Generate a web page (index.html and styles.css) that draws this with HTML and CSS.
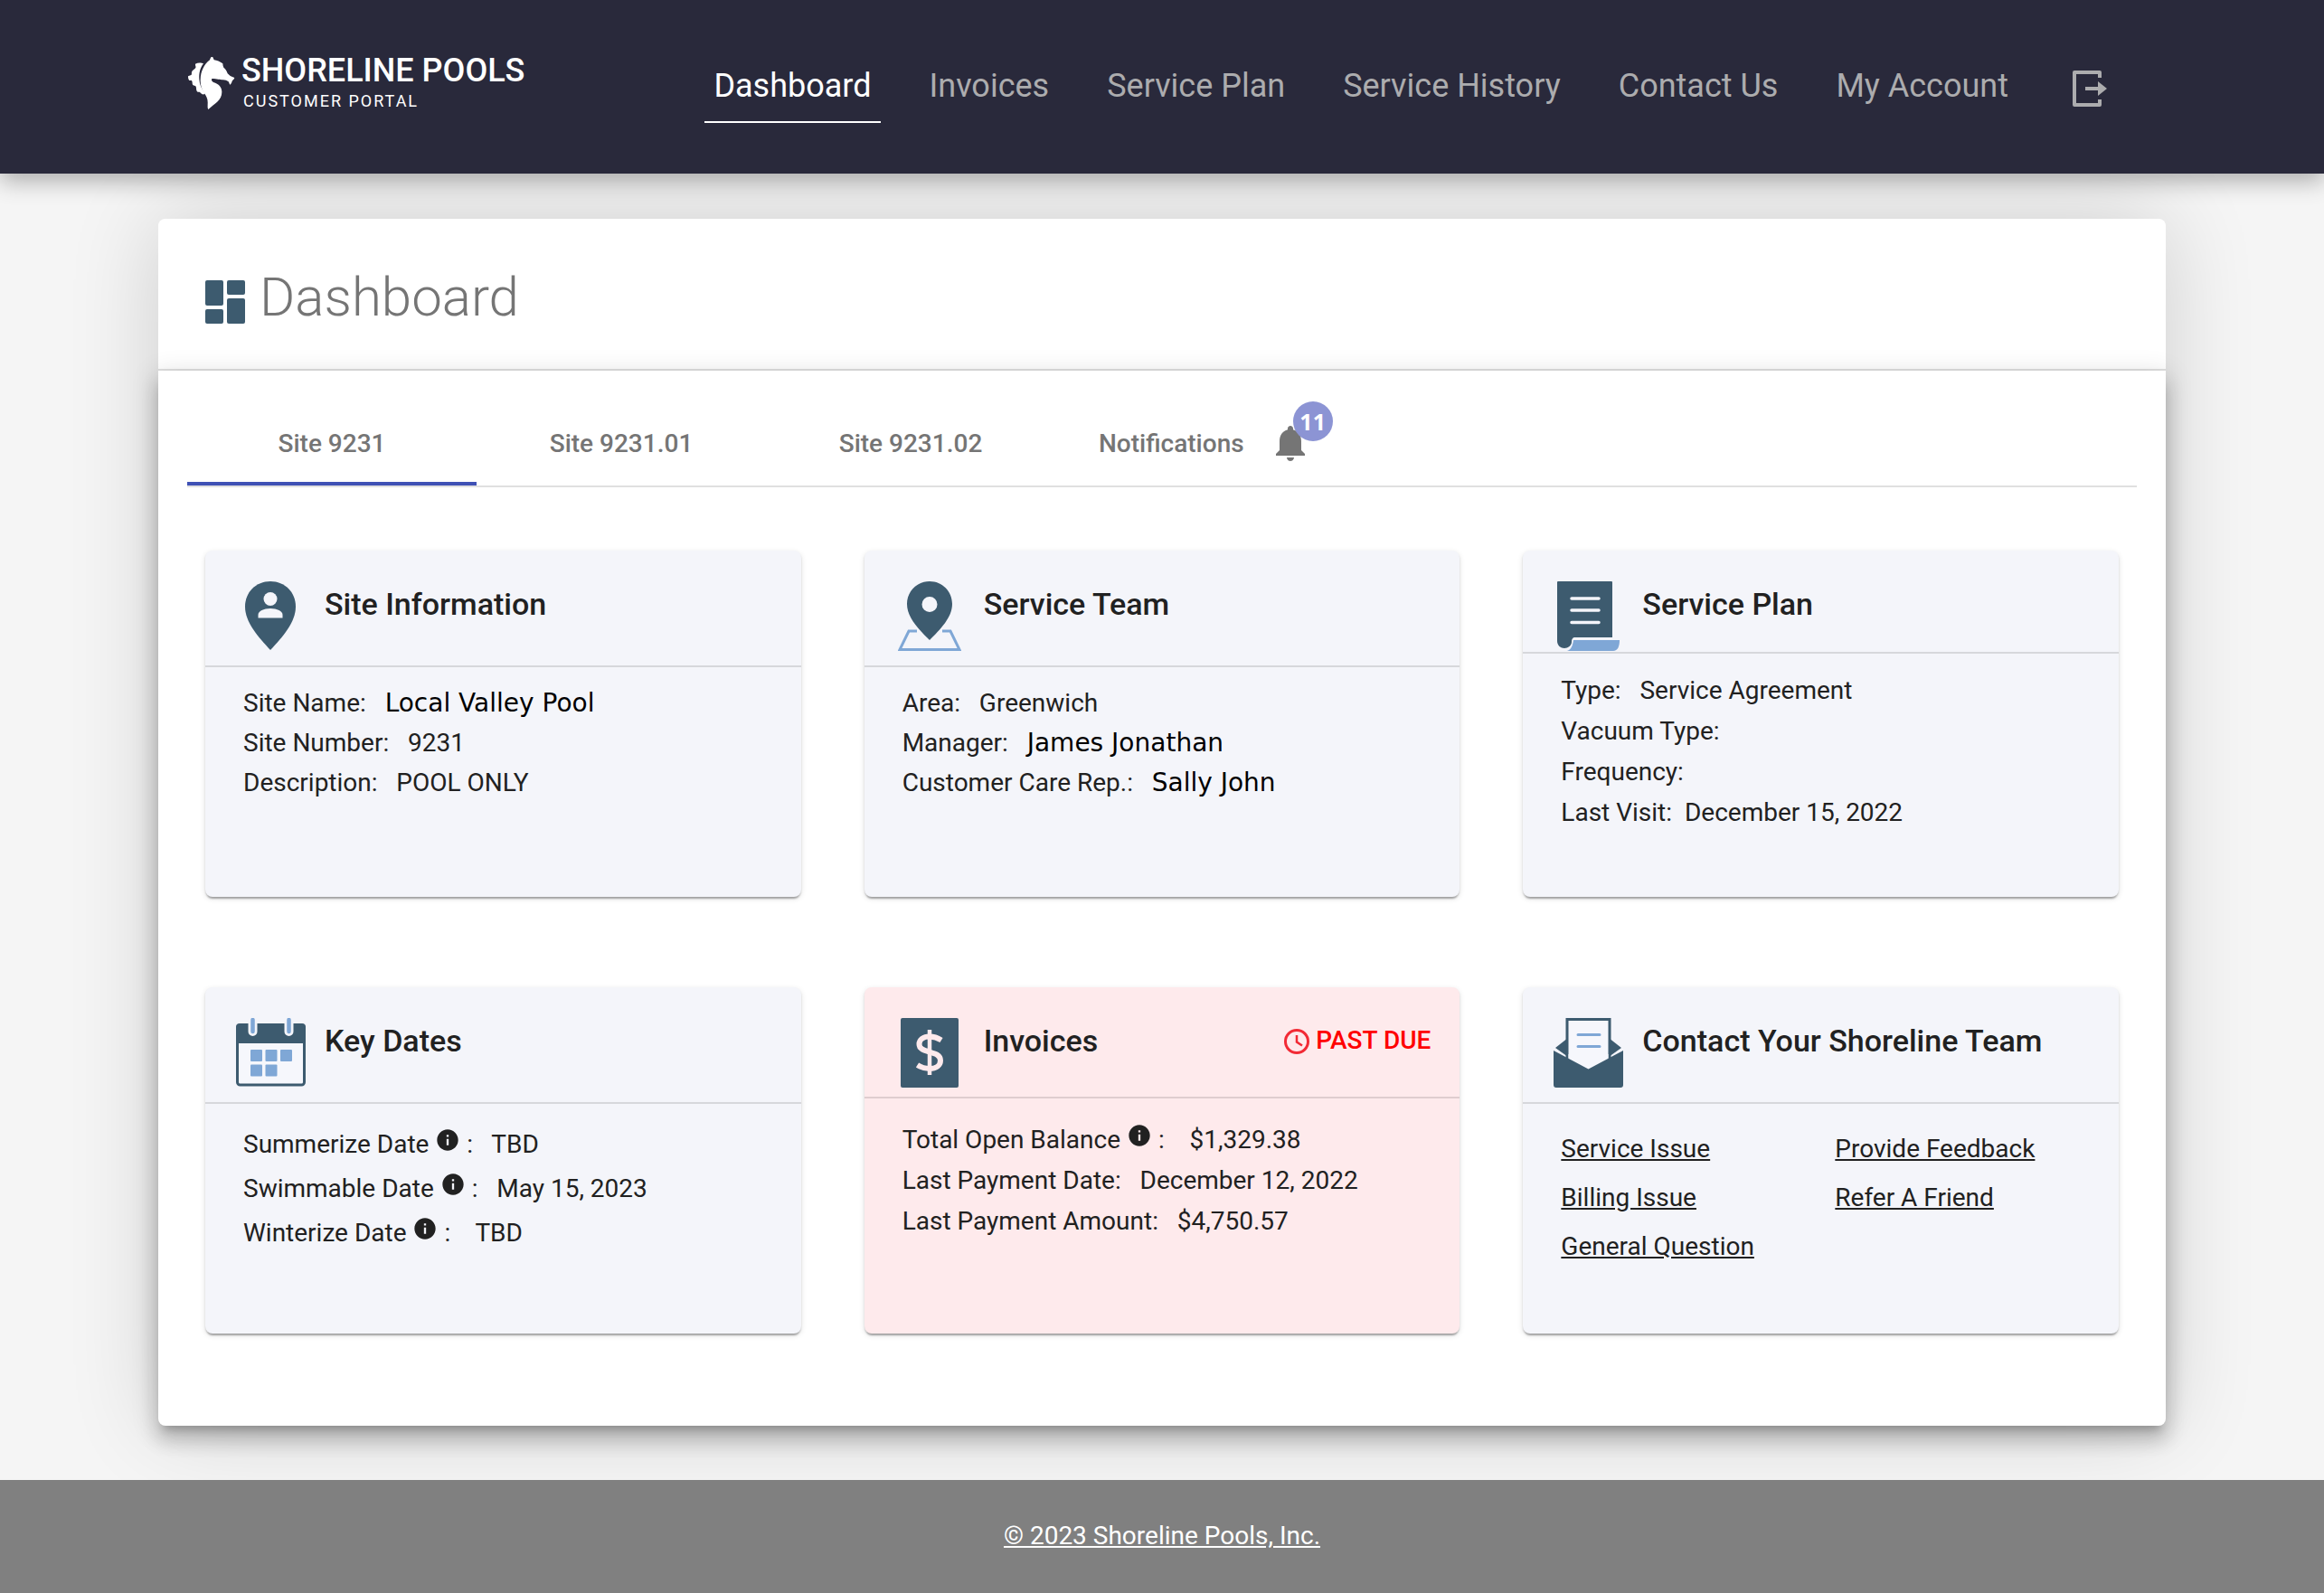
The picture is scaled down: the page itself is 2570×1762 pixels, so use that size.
FILE: index.html
```html
<!DOCTYPE html>
<html lang="en">
<head>
<meta charset="utf-8">
<meta name="viewport" content="width=device-width, initial-scale=1">
<title>Dashboard - Shoreline Pools Customer Portal</title>
<link rel="stylesheet" href="styles.css">
</head>
<body>
<svg class="defs" aria-hidden="true">
  <symbol id="info" viewBox="0 0 24 24"><path fill="currentColor" d="M12 2C6.48 2 2 6.48 2 12s4.480 10 10 10 10-4.480 10-10S17.520 2 12 2zm1 15h-2v-6h2v6zm0-8h-2V7h2v2z"/></symbol>
</svg>
<header class="topbar">
  <a class="logo" href="#">
    <svg class="logo-mark" viewBox="54 66 156 174" aria-hidden="true">
      <path fill="#fff" d="M133 65c4 1 5 6 7 11 10 1 19 6 29 12 0 5 1 9 3 13 6 4 10 11 13 20l9 8 14 6c-1 5-5 7-7 10s-2 8-7 13c-4-1-3-6-6-10-5-4-11-6-18-6-12 0-18-4-37-4-2 4-1 8 5 12 18 6 28 16 28 32 0 28-24 38-45 58-3-4-2-12-2-19 1-16-4-25-12-36-9-14-13-30-12-45 1-26 11-48 31-64 2-5 2-9 7-11z"/>
      <path fill="#fff" d="M105 88c-6-2-17-4-27 1-1 6 3 8 1 13-4 5-11 8-13 14-1 5 1 7-2 10l-10 4c0 6 1 11 4 14 4 1 7-1 9 2 2 5 0 9 3 13 3 3 8 1 10 5 2 5 0 12 4 17 4 3 6 0 9 2 3 3 7 8 14 7l3-4c-11-14-18-28-19-46-1-21 3-38 14-52z"/>
    </svg>
    <span class="logo-text">
      <span class="logo-name">SHORELINE POOLS</span>
      <span class="logo-sub">CUSTOMER PORTAL</span>
    </span>
  </a>
  <nav class="nav">
    <a class="active" href="#">Dashboard</a>
    <a href="#">Invoices</a>
    <a href="#">Service Plan</a>
    <a href="#">Service History</a>
    <a href="#">Contact Us</a>
    <a href="#">My Account</a>
    <button class="logout" type="button" aria-label="Log out">
      <svg viewBox="0 0 48 48" width="48" height="48" aria-hidden="true"><path d="M37 12V6H9v36h28v-6" fill="none" stroke="currentColor" stroke-width="4" stroke-linejoin="round"/><path fill="currentColor" d="M21 22h14v-6l10 8-10 8v-6H21z"/></svg>
    </button>
  </nav>
</header>

<main class="panel">
  <div class="panel-title">
    <svg class="title-icon" viewBox="0 0 44 54" aria-hidden="true"><g fill="#3d5b6f"><rect width="20" height="28" rx="2"/><rect y="32" width="20" height="16" rx="2"/><rect x="24" width="20" height="16" rx="2"/><rect x="24" y="20" width="20" height="28" rx="2"/></g></svg>
    <h1>Dashboard</h1>
  </div>
  <div class="panel-body">
    <div class="tabs" role="tablist">
      <button class="tab selected" type="button" role="tab" aria-selected="true">Site 9231</button>
      <button class="tab" type="button" role="tab" aria-selected="false">Site 9231.01</button>
      <button class="tab" type="button" role="tab" aria-selected="false">Site 9231.02</button>
      <button class="tab tab-notes" type="button" role="tab" aria-selected="false">Notifications
        <span class="bell">
          <svg viewBox="0 0 24 24" width="48" height="48" aria-hidden="true"><path fill="currentColor" d="M12 22c1.100 0 2-.9 2-2h-4c0 1.100.89 2 2 2zm6-6v-5c0-3.070-1.640-5.640-4.500-6.320V4c0-.83-.67-1.500-1.500-1.500s-1.500.67-1.500 1.500v.68C7.630 5.360 6 7.920 6 11v5l-2 2v1h16v-1l-2-2z"/></svg>
          <span class="badge">11</span>
        </span>
      </button>
    </div>

    <div class="cards">
      <section class="card">
        <div class="card-head">
          <span class="card-icon"><svg width="58" height="76" viewBox="0 0 58 76" aria-hidden="true"><path fill="#3d5b6f" d="M29 0C13 0 1 12 1 28c0 17 14 33 28 48 14-15 28-31 28-48C57 12 45 0 29 0z"/><circle cx="29" cy="19.500" r="7.500" fill="#f4f5fa"/><path fill="#f4f5fa" d="M15.500 40.500V37c0-4 6-7 13.500-7s13.500 3 13.500 7v3.500z"/></svg></span>
          <h2>Site Information</h2>
        </div>
        <div class="card-body compact">
          <p>Site Name:&nbsp;&nbsp; <span class="alt">Local Valley Pool</span></p>
          <p>Site Number:&nbsp;&nbsp; 9231</p>
          <p>Description:&nbsp;&nbsp; POOL ONLY</p>
        </div>
      </section>

      <section class="card">
        <div class="card-head">
          <span class="card-icon"><svg width="70" height="77" viewBox="0 0 70 77" aria-hidden="true"><path fill="none" stroke="#7fa7d6" stroke-width="3" d="M21 55h-9L2 75.500h66L58 55h-9"/><path fill="#3d5b6f" fill-rule="evenodd" d="M35 0C21 0 10 11 10 25c0 15 13 28 25 40 12-12 25-25 25-40C60 11 49 0 35 0zm0 17a8.500 8.500 0 1 1 0 17 8.500 8.500 0 0 1 0-17z"/></svg></span>
          <h2>Service Team</h2>
        </div>
        <div class="card-body compact">
          <p>Area:&nbsp;&nbsp; Greenwich</p>
          <p>Manager:&nbsp;&nbsp; <span class="alt">James Jonathan</span></p>
          <p>Customer Care Rep.:&nbsp;&nbsp; <span class="alt">Sally John</span></p>
        </div>
      </section>

      <section class="card">
        <div class="card-head tight">
          <span class="card-icon"><svg width="70" height="77" viewBox="0 0 70 77" aria-hidden="true"><path fill="#3d5b6f" d="M2 0h59a1 1 0 0 1 1 1v61H21c-3 0-4 2-4 5 0 4-4 7-8 7s-8-3-8-8V1a1 1 0 0 1 1-1z"/><path fill="#7fa7d6" d="M19 65h51c0 7-2 12-7 12H12c5-2 6-6 7-12z"/><path stroke="#f4f5fa" stroke-width="3.500" stroke-linecap="round" d="M17 19h30M17 32h30M17 45.500h30"/></svg></span>
          <h2>Service Plan</h2>
        </div>
        <div class="card-body">
          <p>Type:&nbsp;&nbsp; Service Agreement</p>
          <p>Vacuum Type:</p>
          <p>Frequency:</p>
          <p>Last Visit:&nbsp; December 15, 2022</p>
        </div>
      </section>

      <section class="card">
        <div class="card-head">
          <span class="card-icon"><svg width="77" height="76" viewBox="0 0 77 76" aria-hidden="true"><rect x="1.500" y="8" width="74" height="66" rx="3" fill="#f6f7fc" stroke="#3d5b6f" stroke-width="3"/><path fill="#3d5b6f" d="M0 28V10q0-4 4-4h69q4 0 4 4v18z"/><path stroke="#f4f5fa" stroke-width="10" stroke-linecap="round" d="M18.500 0v15M58.500 0v15"/><path stroke="#7fa7d6" stroke-width="4.500" stroke-linecap="round" d="M18.500 2v13M58.500 2v13"/><g fill="#7fa7d6"><rect x="16" y="35" width="13" height="13" rx="1"/><rect x="32.500" y="35" width="13" height="13" rx="1"/><rect x="49" y="35" width="13" height="13" rx="1"/><rect x="16" y="51.500" width="13" height="13" rx="1"/><rect x="32.500" y="51.500" width="13" height="13" rx="1"/></g></svg></span>
          <h2>Key Dates</h2>
        </div>
        <div class="card-body dates">
          <p>Summerize Date <svg class="info" role="img" aria-label="Info"><use href="#info"/></svg> :&nbsp;&nbsp; TBD</p>
          <p>Swimmable Date <svg class="info" role="img" aria-label="Info"><use href="#info"/></svg> :&nbsp;&nbsp; May 15, 2023</p>
          <p>Winterize Date <svg class="info" role="img" aria-label="Info"><use href="#info"/></svg> :&nbsp;&nbsp;&nbsp; TBD</p>
        </div>
      </section>

      <section class="card overdue">
        <div class="card-head medium">
          <span class="card-icon"><svg width="64" height="77" viewBox="0 0 64 77" aria-hidden="true"><rect width="64" height="77" rx="2" fill="#3d5b6f"/><path fill="none" stroke="#feeaec" stroke-width="6" d="M45 24.500C41 22 37 20.500 32 20.500c-7 0-11.500 3.500-11.500 8.500 0 11 23.500 6 23.500 18 0 5.500-5 9-12 9-5 0-9.500-1.500-13.500-4"/><path stroke="#feeaec" stroke-width="4.500" d="M32 13v50"/></svg></span>
          <h2>Invoices</h2>
          <span class="past-due">
            <svg viewBox="0 0 34 34" width="34" height="34" aria-hidden="true"><circle cx="17" cy="18" r="12.500" fill="none" stroke="#f22a35" stroke-width="3"/><path fill="none" stroke="#f22a35" stroke-width="2.500" d="M17 11v7.500l6 4"/></svg>
            PAST DUE
          </span>
        </div>
        <div class="card-body roomy">
          <p>Total Open Balance <svg class="info" role="img" aria-label="Info"><use href="#info"/></svg> :&nbsp;&nbsp;&nbsp; $1,329.38</p>
          <p>Last Payment Date:&nbsp;&nbsp; December 12, 2022</p>
          <p>Last Payment Amount:&nbsp;&nbsp; $4,750.57</p>
        </div>
      </section>

      <section class="card">
        <div class="card-head">
          <span class="card-icon"><svg width="77" height="77" viewBox="0 0 77 77" aria-hidden="true"><path fill="#3d5b6f" d="M16 22L2 33l14 10zM61 22l14 11-14 10z"/><path fill="#f6f7fc" stroke="#3d5b6f" stroke-width="3" d="M15 46V1.500h47V46"/><path fill="#f6f7fc" d="M16.500 40h44v8L38.500 60l-22-12z"/><path fill="#3d5b6f" d="M0 36l38.500 20.500L77 36v38q0 3-3 3H3q-3 0-3-3z"/><path stroke="#7fa7d6" stroke-width="3" stroke-linecap="round" d="M27 18.500h24M27 31.500h24"/></svg></span>
          <h2>Contact Your Shoreline Team</h2>
        </div>
        <div class="card-body roomy links">
          <a href="#">Service Issue</a>
          <a href="#">Provide Feedback</a>
          <a href="#">Billing Issue</a>
          <a href="#">Refer A Friend</a>
          <a href="#">General Question</a>
        </div>
      </section>
    </div>
  </div>
</main>

<footer class="footer"><a href="#">© 2023 Shoreline Pools, Inc.</a></footer>
</body>
</html>
```
FILE: styles.css
```css
* { box-sizing: border-box; }
body {
  margin: 0;
  min-height: 100vh;
  display: flex;
  flex-direction: column;
  background: #f5f5f5;
  color: #212121;
  font-family: Roboto, sans-serif;
  font-size: 28px;
}
h1, h2, p { margin: 0; }
button { font: inherit; color: inherit; background: none; border: 0; padding: 0; cursor: pointer; }
svg { display: block; flex: none; }
.defs { position: absolute; width: 0; height: 0; }

/* Top bar */
.topbar {
  position: relative;
  z-index: 2;
  display: flex;
  align-items: center;
  justify-content: space-between;
  height: 192px;
  padding: 0 227px 0 208px;
  background: #29293b;
  box-shadow: 0 8px 24px rgba(0,0,0,.3);
}
.logo { display: flex; align-items: center; gap: 7px; padding-bottom: 8px; color: #fff; text-decoration: none; }
.logo-mark { width: 52px; height: 58px; }
.logo-text { display: flex; flex-direction: column; }
.logo-name { font-size: 36px; font-weight: 500; line-height: 40px; }
.logo-sub { font-size: 18px; line-height: 28px; letter-spacing: 2px; padding-left: 2px; }
.nav { display: flex; align-items: center; gap: 44px; font-size: 36px; line-height: 42px; color: #acacae; }
.nav a { padding: 18px 10px; border-bottom: 2px solid transparent; color: inherit; text-decoration: none; white-space: nowrap; }
.nav a.active { color: #fff; border-color: #fff; }
.logout { padding: 4px 10px 0; }

/* Page panel */
.panel {
  flex: 1;
  display: flex;
  flex-direction: column;
  margin: 50px 175px 60px;
  border-radius: 8px;
  box-shadow: 0 0 100px rgba(0,0,0,.16);
}
.panel-title {
  display: flex;
  align-items: flex-end;
  gap: 16px;
  padding: 52px 52px 44px;
  border-bottom: 2px solid #e0e0e0;
  border-radius: 8px 8px 0 0;
  background: #fff;
}
.panel-title h1 { font-size: 60px; line-height: 70px; font-weight: 300; color: #757575; }
.title-icon { width: 44px; height: 54px; }
.panel-body {
  flex: 1;
  padding: 31px 32px 102px;
  border-radius: 0 0 8px 8px;
  background: #fff;
  box-shadow: 0 10px 10px -6px rgba(0,0,0,.2), 0 16px 20px 2px rgba(0,0,0,.14), 0 6px 28px 4px rgba(0,0,0,.12);
}
.tabs { display: flex; border-bottom: 2px solid #e0e0e0; }
.tab { width: 320px; height: 96px; padding-top: 2px; font-weight: 500; color: #757575; border-top: 4px solid transparent; border-bottom: 4px solid transparent; }
.tab.selected { border-bottom-color: #3f51b5; }
.tab-notes { display: flex; align-items: center; gap: 27px; width: auto; padding: 2px 48px 0; }
.bell { position: relative; }
.badge {
  position: absolute;
  left: 27px;
  top: -22px;
  width: 44px;
  height: 44px;
  border-radius: 50%;
  background: #8c94d4;
  color: #fff;
  font: 700 25px/44px "Open Sans", sans-serif;
  text-align: center;
}

/* Cards */
.cards {
  display: grid;
  grid-template-columns: repeat(3, minmax(0, 1fr));
  gap: 100px 70px;
  padding: 70px 20px 0;
}
.card {
  min-height: 383px;
  border-radius: 8px;
  background: #f4f5fa;
  box-shadow: 0 4px 2px -2px rgba(0,0,0,.2), 0 2px 2px 0 rgba(0,0,0,.14), 0 2px 6px 0 rgba(0,0,0,.12);
}
.card.overdue { background: #feeaec; }
.card-head { display: flex; align-items: flex-start; gap: 20px; min-height: 129px; padding: 34px 32px 0; border-bottom: 2px solid rgba(0,0,0,.12); }
.card-head.tight { min-height: 114px; }
.card-head.medium { min-height: 123px; }
.card-icon { display: flex; justify-content: center; width: 80px; }
.card-head h2 { font-size: 34px; line-height: 50px; font-weight: 500; }
.past-due { display: flex; align-items: center; gap: 4px; margin-left: auto; line-height: 50px; font-weight: 500; color: #f00; }
.card-body { padding: 18px 42px; line-height: 45px; }
.card-body.compact { line-height: 44px; }
.card-body.roomy { padding-top: 23px; }
.card-body.dates { padding-top: 20px; line-height: 49px; }
.alt { font-family: "DejaVu Sans", sans-serif; color: #000; }
.info { display: inline; width: 28px; height: 28px; }
.card-body.links { display: grid; grid-template-columns: 303px 1fr; line-height: 54px; }
.links a { color: inherit; justify-self: start; }

/* Footer */
.footer { position: relative; z-index: 1; padding: 39px 0 40px; background: #808080; text-align: center; line-height: 46px; }
.footer a { color: #fff; }
```
